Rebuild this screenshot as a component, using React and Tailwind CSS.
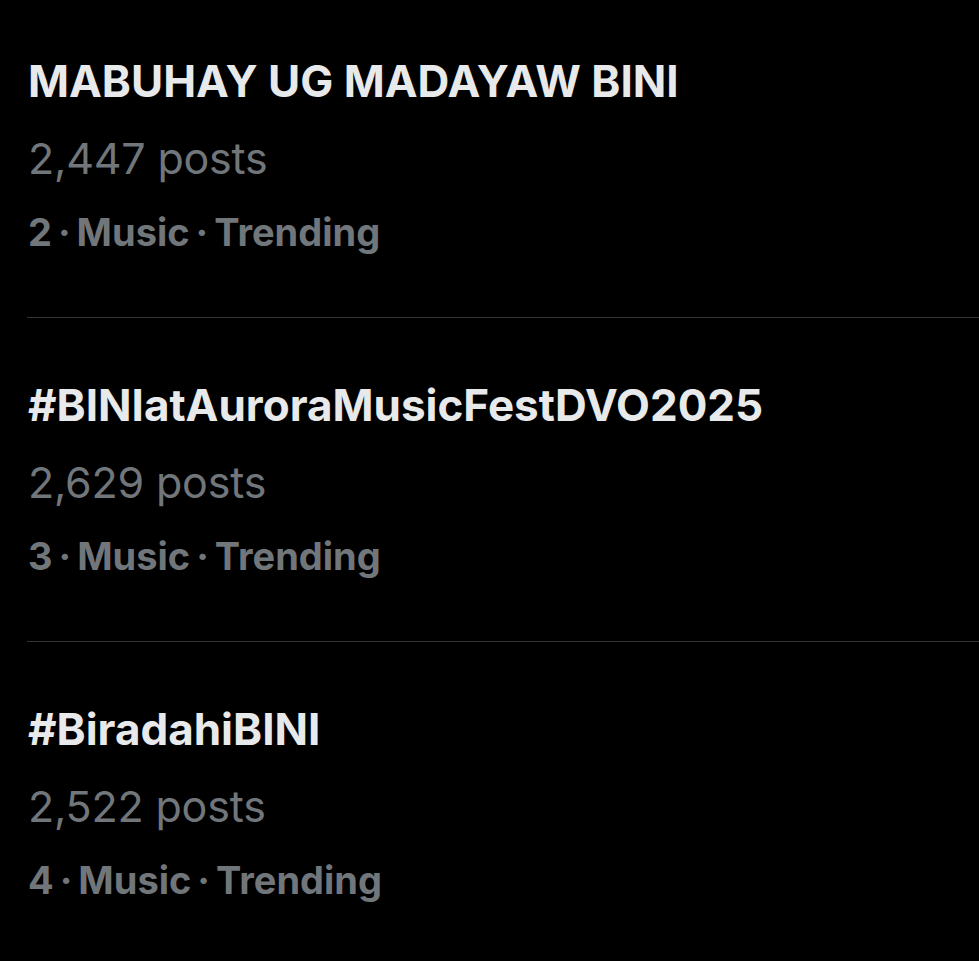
const trends = [
  { rank: 2, title: 'MABUHAY UG MADAYAW BINI', posts: '2,447', category: 'Music' },
  { rank: 3, title: '#BINIatAuroraMusicFestDVO2025', posts: '2,629', category: 'Music' },
  { rank: 4, title: '#BiradahiBINI', posts: '2,522', category: 'Music' },
];

export default function App() {
  return (
    <div
      className="min-h-screen w-full bg-black pl-[27px]"
      style={{ fontFamily: 'Inter, "Noto Sans", sans-serif' }}
    >
      {trends.map((t, i) => (
        <div
          key={t.rank}
          className={`${i === 0 ? 'pt-[53px]' : 'pt-[59px]'} pb-[61px] ${
            i < trends.length - 1 ? 'border-b border-[#2f3336]' : ''
          }`}
        >
          <p className="text-[44px] leading-[56px] font-bold text-[#e7e9ea] pl-px">{t.title}</p>
          <p className="mt-[21px] text-[43px] leading-[56px] tracking-[-0.2px] text-[#71767b] pl-px">
            {t.posts} posts
          </p>
          <p className="mt-[22px] text-[38px] leading-[48px] font-bold text-[#71767b] pl-px">
            {t.rank}{'\u2009·\u2009'}{t.category}{'\u2009·\u2009'}Trending
          </p>
        </div>
      ))}
    </div>
  );
}
